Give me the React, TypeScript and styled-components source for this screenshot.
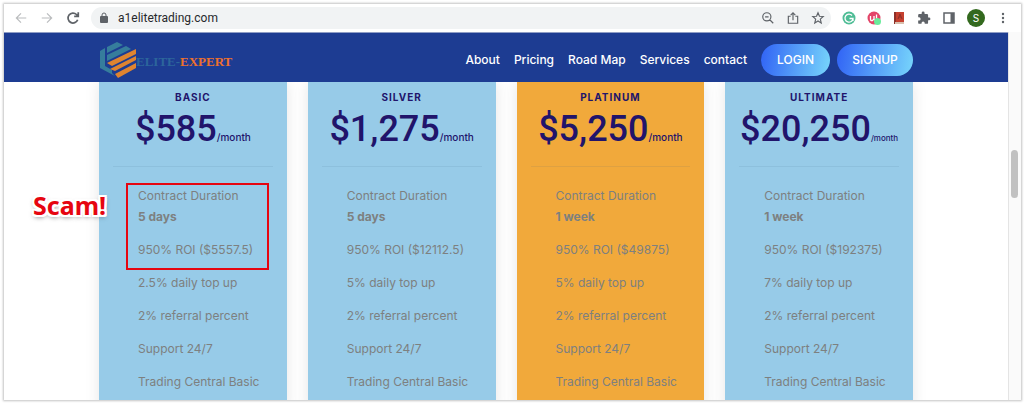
import React from "react";
import styled, { createGlobalStyle } from "styled-components";

const GlobalStyle = createGlobalStyle`
  * { box-sizing: border-box; }
  body { margin: 0; background: #fff; font-family: Inter, "Open Sans", sans-serif; }
  h2, p, ul { margin: 0; padding: 0; }
  button { font-family: inherit; border: 0; cursor: pointer; }
`;

const Screen = styled.div`
  height: 100vh;
  padding: 4px 3px 4px 4px;
  background: #fff;
`;

const Browser = styled.div`
  position: relative;
  display: flex;
  flex-direction: column;
  height: 100%;
  overflow: hidden;
  background: #fff;
  box-shadow: 0 0 2px 1px rgba(0, 0, 0, 0.24);
`;

const Toolbar = styled.div`
  display: flex;
  align-items: center;
  flex: none;
  height: 28px;
  padding: 0 10px 0 9px;
  gap: 10px;
`;

const IconButton = styled.button`
  display: grid;
  place-items: center;
  flex: none;
  width: 16px;
  height: 16px;
  padding: 0;
  background: none;
  color: #5f6368;
`;

const AddressBar = styled.form`
  display: flex;
  align-items: center;
  flex: 1;
  height: 22px;
  margin: 0;
  padding: 0 5px 0 8px;
  gap: 9px;
  border-radius: 11px;
  background: #f1f3f4;
  color: #5f6368;
`;

const Address = styled.input`
  flex: 1;
  min-width: 0;
  padding: 0;
  border: 0;
  outline: 0;
  background: none;
  color: #27292c;
  font: 12px Roboto, sans-serif;
`;

const NavGroup = styled.div`
  display: flex;
  gap: 10px;
`;

const Extensions = styled.div`
  display: flex;
  align-items: center;
  gap: 9px;
`;

const Avatar = styled.button`
  flex: none;
  width: 18px;
  height: 18px;
  padding: 0;
  border-radius: 50%;
  background: #33691e;
  color: #fff;
  font-size: 10px;
  line-height: 18px;
`;

const View = styled.div`
  display: flex;
  flex: 1;
  min-height: 0;
`;

const Page = styled.div`
  flex: 1;
  min-width: 0;
  overflow: hidden;
`;

const Scrollbar = styled.div`
  width: 13px;
  padding: 118px 3px 0 2px;
  border-left: 1px solid #e4e4e4;
  background: #fafafa;
`;

const Thumb = styled.div`
  width: 7px;
  height: 48px;
  border-radius: 4px;
  background: #c1c1c1;
`;

const Header = styled.header`
  position: relative;
  padding: 0 16px;
  border-top: 1px solid #8f9dc5;
  background: #1d3c92;
`;

const Container = styled.div`
  max-width: 814px;
  margin: 0 auto;
`;

const HeaderRow = styled(Container)`
  display: flex;
  align-items: center;
  justify-content: space-between;
  height: 49px;
  padding-top: 4px;
`;

const Logo = styled.a`
  display: block;
  height: 36px;
`;

const Menu = styled.nav`
  display: flex;
  align-items: center;
  gap: 14px;
`;

const MenuLink = styled.a`
  color: #fff;
  font-size: 12px;
  font-weight: 500;
  line-height: 18px;
  text-decoration: none;
`;

const Actions = styled.div`
  display: flex;
  gap: 7px;
`;

const Pill = styled.button<{ $width: number }>`
  width: ${(p) => p.$width}px;
  height: 32px;
  padding: 0;
  border-radius: 16px;
  background: linear-gradient(100deg, #3468f5 5%, #74d0fb 95%);
  color: #fff;
  font-size: 12px;
  font-weight: 500;
`;

const Plans = styled(Container)`
  display: grid;
  grid-template-columns: repeat(4, minmax(0, 1fr));
  gap: 21px;
`;

const Card = styled.section<{ $featured?: boolean }>`
  min-height: 330px;
  padding: 6px 14px 0;
  background: ${(p) => (p.$featured ? "#f1a93b" : "#97cbe8")};
  box-shadow: 0 0 14px rgba(0, 0, 0, 0.1);
`;

const PlanName = styled.h2`
  color: #21146b;
  font-size: 10px;
  font-weight: 700;
  line-height: 18px;
  letter-spacing: 1px;
  text-align: center;
`;

const Price = styled.p`
  display: flex;
  align-items: baseline;
  justify-content: center;
  height: 61px;
  border-bottom: 1px solid rgba(60, 100, 130, 0.1);
  color: #21146b;
  font-family: Roboto, sans-serif;
  font-size: 36px;
  font-weight: 500;
  line-height: 46px;
  white-space: nowrap;
`;

const Period = styled.span<{ $small?: boolean }>`
  font-family: Inter, sans-serif;
  font-size: ${(p) => (p.$small ? 8 : 10)}px;
  font-weight: 500;
`;

const Features = styled.ul`
  display: flex;
  flex-direction: column;
  gap: 12px;
  padding: 18px 0 0 25px;
  list-style: none;
  color: #7d8080;
  font-size: 12px;
  line-height: 21px;
  white-space: nowrap;
`;

const Term = styled.strong`
  display: block;
`;

const Highlight = styled.div`
  position: absolute;
  top: 179px;
  left: 122px;
  width: 143px;
  height: 87px;
  border: 2px solid #e60510;
`;

const Callout = styled.div`
  position: absolute;
  top: 184px;
  left: 29px;
  color: #e60510;
  font: 700 25px/34px "Noto Sans", "Open Sans", sans-serif;
  text-shadow: 2px 0 #fff, -2px 0 #fff, 0 2px #fff, 0 -2px #fff, 2px 2px #fff,
    -2px 2px #fff, 2px -2px #fff, -2px -2px #fff, 0 2px 5px rgba(0, 0, 0, 0.6);
`;

const plans = [
  { name: "BASIC", price: "$585", term: "5 days", roi: "$5557.5", daily: "2.5%" },
  { name: "SILVER", price: "$1,275", term: "5 days", roi: "$12112.5", daily: "5%" },
  { name: "PLATINUM", price: "$5,250", term: "1 week", roi: "$49875", daily: "5%", featured: true },
  { name: "ULTIMATE", price: "$20,250", term: "1 week", roi: "$192375", daily: "7%", smallPeriod: true },
];

const Glyph = ({ d, color = "currentColor", width = 2 }: { d: string; color?: string; width?: number }) => (
  <svg width="14" height="14" viewBox="0 0 24 24" fill="none" stroke={color} strokeWidth={width}>
    <path d={d} />
  </svg>
);

const GrammarIcon = () => (
  <svg width="14" height="14" viewBox="0 0 14 14">
    <circle cx="7" cy="7" r="6.500" fill="#4fbd96" />
    <path d="M10 4.500A4 4 0 1 0 11 7.500H7.500M11 7.500V10" fill="none" stroke="#fff" strokeWidth="1.300" />
  </svg>
);

const UpIcon = () => (
  <svg width="15" height="15" viewBox="0 0 15 15">
    <circle cx="7" cy="7" r="6.500" fill="#e34468" />
    <path d="M3.500 5V8Q3.500 10 5.500 9.500L7 8V5M7 8Q8 10 9.500 9V3.500" fill="none" stroke="#fff" strokeWidth="1.300" />
    <circle cx="10.500" cy="10.500" r="3.500" fill="#69eb9b" />
  </svg>
);

const BookIcon = () => (
  <svg width="12" height="14" viewBox="0 0 12 14">
    <path d="M1 1H11V13H1Z" fill="#c5402f" />
    <path d="M1 1H3V13H1Z" fill="#8d3029" />
    <path d="M2 11H11V13H2Z" fill="#d8bfae" />
    <path d="M5 8L7 3L9 8M6 6H8" fill="none" stroke="#8d3029" />
  </svg>
);

const PuzzleIcon = () => (
  <svg width="14" height="14" viewBox="0 0 24 24" fill="#5f6368">
    <path d="M20.500 11H19V7a2 2 0 0 0-2-2h-4V3.500a2.500 2.500 0 0 0-5 0V5H4a2 2 0 0 0-2 2v3.800h1.500a2.700 2.700 0 0 1 0 5.400H2V20a2 2 0 0 0 2 2h3.800v-1.500a2.700 2.700 0 0 1 5.400 0V22H17a2 2 0 0 0 2-2v-4h1.500a2.500 2.500 0 0 0 0-5z" />
  </svg>
);

const PanelIcon = () => (
  <svg width="12" height="12" viewBox="0 0 12 12">
    <rect x="1" y="1" width="10" height="10" fill="none" stroke="#5f6368" strokeWidth="1.500" />
    <path d="M7.500 1H11V11H7.500Z" fill="#5f6368" />
  </svg>
);

const DotsIcon = () => (
  <svg width="4" height="14" viewBox="0 0 4 14" fill="#5f6368">
    <circle cx="2" cy="3" r="1.200" />
    <circle cx="2" cy="7" r="1.200" />
    <circle cx="2" cy="11" r="1.200" />
  </svg>
);

const EliteLogo = () => (
  <svg width="134" height="36" viewBox="0 0 134 36" role="img" aria-label="Elite-Expert">
    <g fill="#367d9c">
      <path d="M1 9L6 6V24L13 28V31L16 34L1 26Z" />
      <path d="M8 5L18 0L24 3L8 11Z" />
      <path d="M8 13L27 4L32 7L8 19Z" />
    </g>
    <g fill="#df8430">
      <path d="M8 21L37 7V12L13 24Z" />
      <path d="M11 27L37 14V18L16 29Z" />
      <path d="M16 32L37 21V26L19 36Z" />
    </g>
    <g fontFamily="Liberation Serif" fontSize="13" fontWeight="700">
      <text x="37" y="24" fill="#2c659b">ELITE-</text>
      <text x="81" y="24" fill="#ed702d">EXPERT</text>
    </g>
  </svg>
);

export default function App() {
  return (
    <Screen>
      <GlobalStyle />
      <Browser>
        <Toolbar>
          <NavGroup>
            <IconButton aria-label="Back"><Glyph color="#babcbe" d="M21 12H4M12 4L4 12L12 20" /></IconButton>
            <IconButton aria-label="Forward"><Glyph color="#babcbe" d="M3 12H20M12 4L20 12L12 20" /></IconButton>
            <IconButton aria-label="Reload"><Glyph width={3} d="M20 15A8.500 8.500 0 1 1 18 6L21 9M21 2V9H14" /></IconButton>
          </NavGroup>
          <AddressBar>
            <svg width="10" height="12" viewBox="0 0 10 12" aria-hidden="true">
              <rect x="1" y="4" width="8" height="7" rx="1" fill="#5f6368" />
              <path d="M3 5V3a2 2 0 0 1 4 0V5" fill="none" stroke="#5f6368" />
            </svg>
            <Address aria-label="Address" defaultValue="a1elitetrading.com" />
            <IconButton type="button" aria-label="Zoom out"><Glyph d="M15 15L21 21M7 10H13M17 10A7 7 0 1 1 3 10A7 7 0 1 1 17 10" /></IconButton>
            <IconButton type="button" aria-label="Share"><Glyph d="M8 9H4V21H20V9H16M12 16V3M8 7L12 3L16 7" /></IconButton>
            <IconButton type="button" aria-label="Bookmark"><Glyph d="M12 3L14.500 9L21 9.500L16 14L17.500 20.500L12 17L6.500 20.500L8 14L3 9.500L9.500 9Z" /></IconButton>
          </AddressBar>
          <Extensions>
            <IconButton aria-label="Grammar"><GrammarIcon /></IconButton>
            <IconButton aria-label="Freelance alerts"><UpIcon /></IconButton>
            <IconButton aria-label="Dictionary"><BookIcon /></IconButton>
            <IconButton aria-label="Extensions"><PuzzleIcon /></IconButton>
            <IconButton aria-label="Side panel"><PanelIcon /></IconButton>
          </Extensions>
          <Avatar aria-label="Profile">S</Avatar>
          <IconButton aria-label="More"><DotsIcon /></IconButton>
        </Toolbar>
        <View>
          <Page>
            <Header>
              <HeaderRow>
                <Logo href="#home"><EliteLogo /></Logo>
                <Menu>
                  {["About", "Pricing", "Road Map", "Services", "contact"].map((label) => (
                    <MenuLink key={label} href={`#${label}`}>{label}</MenuLink>
                  ))}
                  <Actions>
                    <Pill $width={69}>LOGIN</Pill>
                    <Pill $width={76}>SIGNUP</Pill>
                  </Actions>
                </Menu>
              </HeaderRow>
            </Header>
            <Plans>
              {plans.map((plan) => (
                <Card key={plan.name} $featured={plan.featured}>
                  <PlanName>{plan.name}</PlanName>
                  <Price>{plan.price}<Period $small={plan.smallPeriod}>/month</Period></Price>
                  <Features>
                    <li>Contract Duration<Term>{plan.term}</Term></li>
                    <li>950% ROI ({plan.roi})</li>
                    <li>{plan.daily} daily top up</li>
                    <li>2% referral percent</li>
                    <li>Support 24/7</li>
                    <li>Trading Central Basic</li>
                  </Features>
                </Card>
              ))}
            </Plans>
          </Page>
          <Scrollbar><Thumb /></Scrollbar>
        </View>
        <Highlight />
        <Callout>Scam!</Callout>
      </Browser>
    </Screen>
  );
}
